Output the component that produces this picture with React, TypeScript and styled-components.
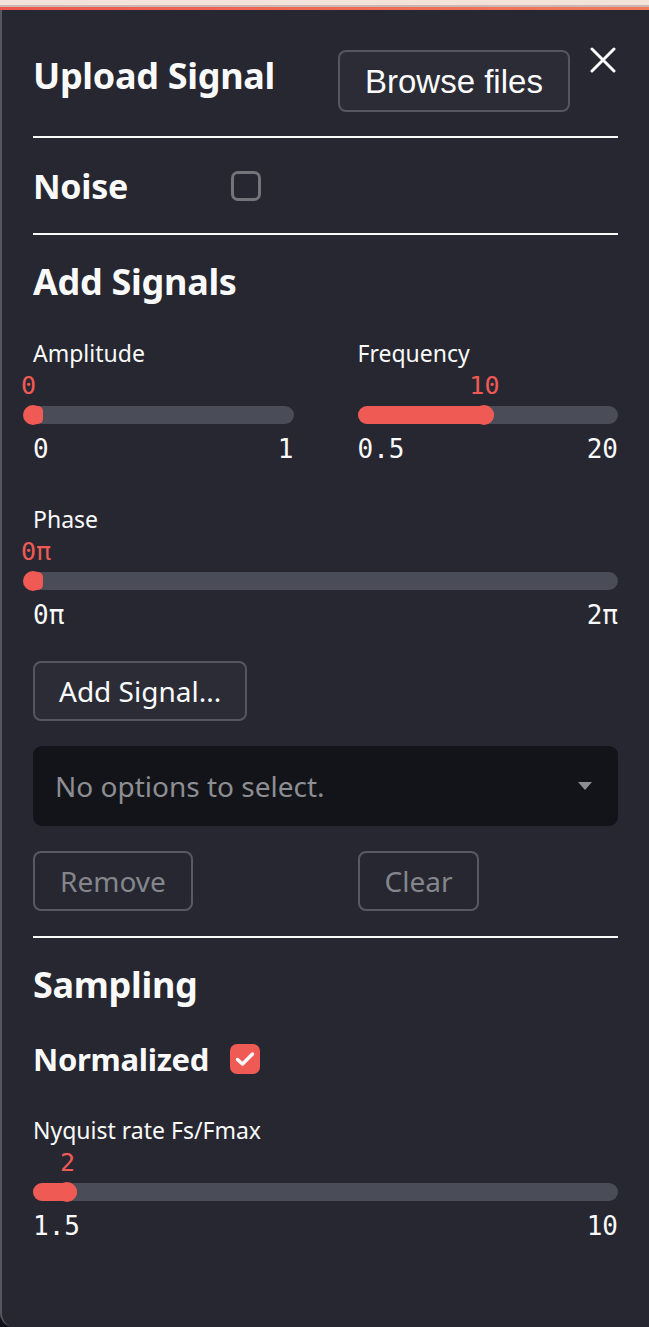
import React from "react";
import styled, { createGlobalStyle } from "styled-components";

const Global = createGlobalStyle`
  html, body { margin: 0; padding: 0; }
  body {
    background: #0e1117;
    font-family: "Noto Sans", "Open Sans", sans-serif;
    color: #fafafa;
  }
  * { box-sizing: border-box; }
`;

const RED = "#ef5a55";

const TopStrip = styled.div`
  height: 10px;
  background: linear-gradient(
    to bottom,
    #f3e2da 0px,
    #f3e2da 5px,
    #cbb8b0 5px,
    #cbb8b0 7px,
    transparent 7px
  );
  position: relative;
  &::after {
    content: "";
    position: absolute;
    left: 0;
    right: 0;
    top: 7px;
    height: 3px;
    background: linear-gradient(to right, #ee5750, #f07a5c);
  }
`;

const Panel = styled.aside`
  position: relative;
  background: #262730;
  border-left: 2px solid #55565e;
  border-bottom-left-radius: 14px;
  min-height: 1317px;
  padding: 40px 31px 40px 31px;
  display: flex;
  flex-direction: column;
`;

const CloseButton = styled.button`
  position: absolute;
  top: 34px;
  right: 30px;
  width: 32px;
  height: 32px;
  padding: 0;
  border: none;
  background: transparent;
  color: #fafafa;
  display: flex;
  align-items: center;
  justify-content: center;
`;

const Header = styled.div`
  display: grid;
  grid-template-columns: 305px auto;
  align-items: start;
  height: 62px;
`;

const Heading = styled.h2<{ $mt?: number }>`
  margin: ${(p) => p.$mt ?? 0}px 0 0 0;
  font-size: 36px;
  line-height: 46px;
  font-weight: 700;
  letter-spacing: -0.3px;
  white-space: nowrap;
`;

const BrowseButton = styled.button`
  justify-self: start;
  height: 62px;
  padding: 0 25px;
  border-radius: 8px;
  border: 2px solid #55565e;
  background: #2b2c36;
  color: #fafafa;
  font-family: "Liberation Sans", Arial, sans-serif;
  font-size: 33px;
  line-height: 1;
`;

const Divider = styled.hr<{ $mt: number }>`
  margin: ${(p) => p.$mt}px 0 0 0;
  border: none;
  height: 2px;
  background: #fafafa;
  width: 100%;
`;

const CheckRow = styled.div<{ $mt: number; $gap: number }>`
  display: flex;
  align-items: center;
  gap: ${(p) => p.$gap}px;
  height: 46px;
  margin-top: ${(p) => p.$mt}px;
`;

const CheckLabel = styled.span<{ $size: number; $width?: number }>`
  font-size: ${(p) => p.$size}px;
  font-weight: 700;
  line-height: 46px;
  letter-spacing: -0.3px;
  ${(p) => (p.$width ? `width: ${p.$width}px;` : "")}
  white-space: nowrap;
`;

const Box = styled.span<{ $checked?: boolean }>`
  width: 30px;
  height: 30px;
  border-radius: 7px;
  display: flex;
  align-items: center;
  justify-content: center;
  border: ${(p) => (p.$checked ? "none" : "3px solid #74747b")};
  background: ${(p) => (p.$checked ? RED : "transparent")};
`;

const SliderBlock = styled.div<{ $mt: number }>`
  margin-top: ${(p) => p.$mt}px;
  display: flex;
  flex-direction: column;
  min-width: 0;
  width: 100%;
`;

const SliderLabel = styled.div`
  font-size: 23px;
  line-height: 30px;
  height: 30px;
  white-space: nowrap;
`;

const ValueRow = styled.div`
  position: relative;
  height: 26px;
  margin-top: 5px;
`;

const ThumbValue = styled.span<{ $atStart: boolean }>`
  position: absolute;
  top: 0;
  font-family: "DejaVu Sans Mono", monospace;
  font-size: 25px;
  line-height: 26px;
  color: ${RED};
  white-space: nowrap;
  ${(p) => (p.$atStart ? "margin-left: -12px;" : "transform: translateX(-50%);")}
`;

const Track = styled.div`
  position: relative;
  height: 18px;
  margin-top: 7px;
  border-radius: 9px;
  background: #4a4c57;
`;

const Fill = styled.div`
  position: absolute;
  left: 0;
  top: 0;
  bottom: 0;
  border-radius: 9px;
  background: ${RED};
`;

const Thumb = styled.div`
  position: absolute;
  top: 50%;
  width: 20px;
  height: 20px;
  border-radius: 50%;
  background: ${RED};
  transform: translate(-50%, -50%);
`;

const MinMax = styled.div`
  display: flex;
  justify-content: space-between;
  margin-top: 12px;
  font-family: "DejaVu Sans Mono", monospace;
  font-size: 26px;
  line-height: 26px;
  height: 26px;
`;

const TwoCols = styled.div<{ $mt: number; $stretch?: boolean }>`
  display: grid;
  grid-template-columns: 1fr 1fr;
  column-gap: 64px;
  margin-top: ${(p) => p.$mt}px;
  justify-items: ${(p) => (p.$stretch ? "stretch" : "start")};
  align-items: start;
`;

const Button = styled.button<{ $disabled?: boolean; $mt?: number; $px: number }>`
  align-self: flex-start;
  margin-top: ${(p) => p.$mt ?? 0}px;
  height: 60px;
  padding: 0 ${(p) => p.$px}px;
  border-radius: 8px;
  border: 2px solid ${(p) => (p.$disabled ? "#595a61" : "#55565e")};
  background: ${(p) => (p.$disabled ? "transparent" : "#2b2c36")};
  color: ${(p) => (p.$disabled ? "#85868c" : "#fafafa")};
  font-family: "Noto Sans", sans-serif;
  font-size: 28px;
  line-height: 1;
  white-space: nowrap;
`;

const Select = styled.div`
  margin-top: 25px;
  height: 80px;
  border-radius: 9px;
  background: #131419;
  display: flex;
  align-items: center;
  justify-content: space-between;
  padding: 0 26px 0 22px;
  color: #8d8e93;
  font-size: 28px;
`;

const Caret = styled.span`
  width: 0;
  height: 0;
  border-left: 7px solid transparent;
  border-right: 7px solid transparent;
  border-top: 8px solid #8d8e93;
`;

type SliderProps = {
  label: string;
  min: number;
  max: number;
  value: number;
  fmt: (v: number) => string;
  mt: number;
};

function Slider({ label, min, max, value, fmt, mt }: SliderProps) {
  const frac = (value - min) / (max - min);
  const pct = frac * 100;
  return (
    <SliderBlock $mt={mt}>
      <SliderLabel>{label}</SliderLabel>
      <ValueRow>
        <ThumbValue $atStart={frac === 0} style={{ left: `${pct}%` }}>
          {fmt(value)}
        </ThumbValue>
      </ValueRow>
      <Track>
        <Fill style={{ width: `calc(${pct}% + 10px)` }} />
        <Thumb style={{ left: `${pct}%` }} />
      </Track>
      <MinMax>
        <span>{fmt(min)}</span>
        <span>{fmt(max)}</span>
      </MinMax>
    </SliderBlock>
  );
}

const num = (v: number) => String(v);
const pi = (v: number) => `${v}π`;

export default function App() {
  return (
    <>
      <Global />
      <TopStrip />
      <Panel>
        <CloseButton aria-label="Close">
          <svg width="26" height="26" viewBox="0 0 26 26">
            <path d="M2 2 L24 24 M24 2 L2 24" stroke="#fafafa" strokeWidth="3" strokeLinecap="round" />
          </svg>
        </CloseButton>
        <Header>
          <Heading $mt={3}>Upload Signal</Heading>
          <BrowseButton>Browse files</BrowseButton>
        </Header>
        <Divider $mt={24} />
        <CheckRow $mt={25} $gap={0}>
          <CheckLabel $size={34} $width={198}>Noise</CheckLabel>
          <Box />
        </CheckRow>
        <Divider $mt={24} />
        <Heading $mt={24}>Add Signals</Heading>
        <TwoCols $mt={33} $stretch>
          <Slider label="Amplitude" min={0} max={1} value={0} fmt={num} mt={0} />
          <Slider label="Frequency" min={0.5} max={20} value={10} fmt={num} mt={0} />
        </TwoCols>
        <Slider label="Phase" min={0} max={2} value={0} fmt={pi} mt={42} />
        <Button $mt={33} $px={24}>Add Signal...</Button>
        <Select>
          <span>No options to select.</span>
          <Caret />
        </Select>
        <TwoCols $mt={25}>
          <Button $disabled $px={25}>Remove</Button>
          <Button $disabled $px={25}>Clear</Button>
        </TwoCols>
        <Divider $mt={25} />
        <Heading $mt={24}>Sampling</Heading>
        <CheckRow $mt={28} $gap={21}>
          <CheckLabel $size={31}>Normalized</CheckLabel>
          <Box $checked>
            <svg width="20" height="16" viewBox="0 0 20 16">
              <path d="M2.5 8.5 L7.5 13 L17.5 3" fill="none" stroke="#fafafa" strokeWidth="3.5" strokeLinecap="round" strokeLinejoin="round" />
            </svg>
          </Box>
        </CheckRow>
        <Slider label="Nyquist rate Fs/Fmax" min={1.5} max={10} value={2} fmt={num} mt={33} />
      </Panel>
    </>
  );
}
